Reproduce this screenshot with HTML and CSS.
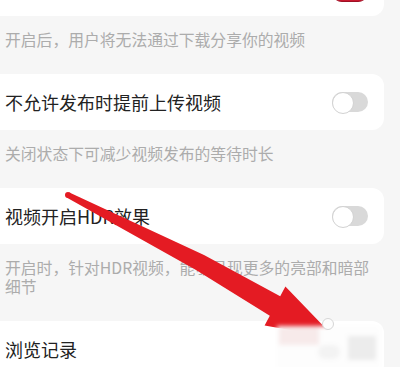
FILE: index.html
```html
<!DOCTYPE html>
<html lang="zh-CN">
<head>
<meta charset="utf-8">
<title>设置</title>
<link rel="stylesheet" href="styles.css">
</head>
<body>
<div class="list">
  <section class="card card-top">
    <span class="title"></span>
    <span class="switch on"></span>
  </section>
  <p class="desc">开启后，用户将无法通过下载分享你的视频</p>
  <section class="card">
    <span class="title">不允许发布时提前上传视频</span>
    <span class="switch"></span>
  </section>
  <p class="desc">关闭状态下可减少视频发布的等待时长</p>
  <section class="card">
    <span class="title">视频开启HDR效果</span>
    <span class="switch"></span>
  </section>
  <p class="desc">开启时，针对HDR视频，能够呈现更多的亮部和暗部细节</p>
  <section class="card">
    <span class="title">浏览记录</span>
    <span class="switch"></span>
  </section>
</div>
<svg class="overlay" width="400" height="367" viewBox="0 0 400 367">
  <defs>
    <filter id="soft" x="-10%" y="-10%" width="120%" height="120%">
      <feGaussianBlur stdDeviation="2"/>
    </filter>
  </defs>
  <circle cx="68" cy="195" r="3" fill="#e41b23"/>
  <polygon fill="#e41b23" points="69.4,192.4 204,255 280.2,296.3 285.4,286.6 335,338 264.6,325.4 269.8,315.7 196,270 66.6,197.6"/>
  <g filter="url(#soft)">
    <rect x="277" y="326" width="103" height="44" fill="#fdfdfd"/>
    <rect x="279" y="327" width="40" height="18" fill="#f7eaea"/>
    <rect x="348" y="336" width="28" height="24" fill="#ececec"/>
    <rect x="318" y="345" width="22" height="14" rx="7" fill="#f3f3f3"/>
  </g>
  <circle cx="328" cy="324" r="5.5" fill="#fdfdfd" stroke="#d6d6d6" stroke-width="1"/>
</svg>
</body>
</html>
```
FILE: styles.css
```css
* {
  box-sizing: border-box;
}

html,
body {
  margin: 0;
}

body {
  position: relative;
  width: 400px;
  height: 367px;
  overflow: hidden;
  background: #f6f6f6;
  font-family: "Noto Sans CJK SC", "Noto Sans", sans-serif;
}

.list {
  display: flex;
  flex-direction: column;
  margin: -40px 16px 0 -12px;
}

.card {
  display: flex;
  align-items: center;
  justify-content: space-between;
  height: 56px;
  padding: 0 16px 0 17px;
  background: #ffffff;
  border-radius: 12px;
}

.card-top {
  align-items: flex-end;
  padding-bottom: 14px;
}

.title {
  font-size: 18px;
  line-height: 24px;
  color: #222222;
}

.desc {
  margin: 0;
  padding: 14px 8px 25px 17px;
  font-size: 15.8px;
  line-height: 19px;
  color: #acacac;
}

.switch {
  position: relative;
  flex: none;
  width: 36px;
  height: 20px;
  border-radius: 10px;
  background: #d9d9d9;
}

.switch::before {
  content: "";
  position: absolute;
  left: 0;
  top: 0;
  width: 20px;
  height: 20px;
  border-radius: 50%;
  background: #ffffff;
  border: 1px solid #d2d2d2;
}

.switch.on {
  background: #c8182f;
  border-bottom: 1px solid #9e1024;
}

.switch.on::before {
  left: 18px;
  top: 2px;
  width: 14px;
  height: 14px;
  border: none;
}

.overlay {
  position: absolute;
  left: 0;
  top: 0;
  pointer-events: none;
}
```
